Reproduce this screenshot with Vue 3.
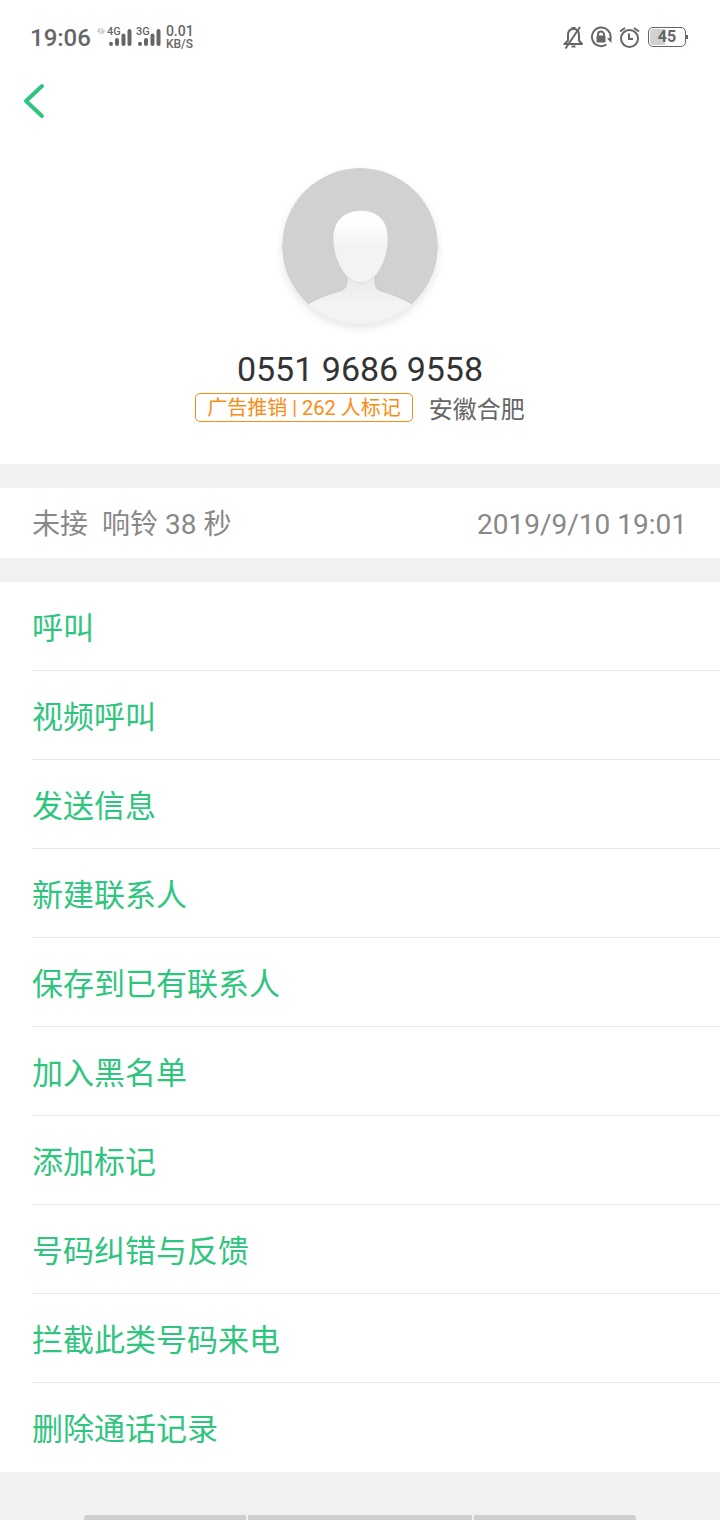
<script setup>
const actions = [
  '呼叫',
  '视频呼叫',
  '发送信息',
  '新建联系人',
  '保存到已有联系人',
  '加入黑名单',
  '添加标记',
  '号码纠错与反馈',
  '拦截此类号码来电',
  '删除通话记录',
]
</script>

<template>
  <div class="page">
    <header class="status">
      <div class="status-left">
        <span class="clock">19:06</span>
        <svg class="data" width="8" height="8" viewBox="0 0 8 8" aria-hidden="true">
          <path d="M0 4 2 1H3.500V7H2V5H0ZM8 4 6 7H4.500V1H6V3H8Z" fill="#cfcfcf" />
        </svg>
        <div v-for="net in ['4G', '3G']" :key="net" class="signal">
          <svg width="24" height="22" viewBox="0 0 24 22" aria-hidden="true">
            <g stroke="#666" stroke-width="4" stroke-linecap="round">
              <path d="M3 16.800V17M9 13V17M15.500 8.500V17M21.500 4V17" />
            </g>
          </svg>
          <span class="net">{{ net }}</span>
        </div>
        <span class="speed"><span class="rate">0.01</span><br />KB/S</span>
      </div>
      <div class="status-right">
        <svg width="22" height="24" viewBox="0 0 22 24" fill="none" stroke="#666" stroke-width="2" aria-hidden="true">
          <path d="M1.500 18H20L17 14.500V9C17 5 14.500 3 11.500 3S6 5 6 9V14.500L2.500 18" stroke-linejoin="round" />
          <path d="M9.500 2H13.500M9.500 20.500H13.500M18 1 3.500 22.500" />
        </svg>
        <svg width="22" height="24" viewBox="0 0 22 24" fill="none" stroke="#666" stroke-width="2" aria-hidden="true">
          <path d="M16.500 18.500A9.300 9.300 0 1 1 20.500 12" />
          <path d="M17 12.500 21.500 11.500V17Z" fill="#666" stroke="none" />
          <rect x="6.500" y="9.500" width="9" height="7" rx="1" fill="#666" stroke="none" />
          <path d="M8 10V8.500A3 3 0 0 1 14 8.500V10" />
        </svg>
        <svg width="22" height="24" viewBox="0 0 22 24" fill="none" stroke="#666" stroke-width="2" aria-hidden="true">
          <circle cx="11.500" cy="12.500" r="8.500" />
          <path d="M11 7.500V13H15M2 5.500 7 2M21 5.500 16 2" />
        </svg>
        <div class="battery"><span class="cell">45</span></div>
      </div>
    </header>

    <nav class="bar">
      <button class="back" type="button" aria-label="返回">
        <svg width="24" height="38" viewBox="0 0 24 38" fill="none" stroke="#2fc57e" stroke-width="4" stroke-linecap="round" stroke-linejoin="round" aria-hidden="true">
          <path d="M20 4 4 19 20 34" />
        </svg>
      </button>
    </nav>

    <section class="profile">
      <svg class="avatar" width="156" height="156" viewBox="0 0 156 156" aria-hidden="true">
        <defs>
          <clipPath id="disc"><circle cx="78" cy="78" r="78" /></clipPath>
          <linearGradient id="face" x1="0" y1="0" x2="0" y2="1">
            <stop offset="0" stop-color="#fff" />
            <stop offset="0.200" stop-color="#fdfdfd" />
            <stop offset="0.500" stop-color="#f3f3f3" />
            <stop offset="1" stop-color="#f3f3f3" />
          </linearGradient>
          <linearGradient id="neck" gradientUnits="userSpaceOnUse" x1="0" y1="106" x2="0" y2="134">
            <stop offset="0" stop-color="#e8e8e8" />
            <stop offset="1" stop-color="#f3f3f3" />
          </linearGradient>
        </defs>
        <g clip-path="url(#disc)">
          <rect width="156" height="156" fill="#d1d1d1" />
          <path d="M65 106V113C65 119 63 121 58 123C46 126 36 130 26 136V158H130V136C120 130 110 126 99 123C94 121 93 119 93 113V106Z" fill="url(#neck)" stroke="#cbcbcb" stroke-width="1" />
          <path d="M79 42.500C96 42.500 106 53 106 70C106 91 95 115 79 115S51 91 51 70C51 53 62 42.500 79 42.500Z" fill="url(#face)" stroke="#cbcbcb" stroke-opacity="0.500" stroke-width="1" />
        </g>
      </svg>
      <h1 class="number">0551 9686 9558</h1>
      <div class="meta">
        <span class="tag">广告推销 | 262 人标记</span>
        <span class="place">安徽合肥</span>
      </div>
    </section>

    <section class="call">
      <span class="call-state"><span>未接</span><span>响铃 38 秒</span></span>
      <time datetime="2019-09-10T19:01">2019/9/10 19:01</time>
    </section>

    <ul class="actions">
      <li v-for="label in actions" :key="label">
        <button type="button">{{ label }}</button>
      </li>
    </ul>

    <footer class="gesture"><i></i><i class="home"></i><i></i></footer>
  </div>
</template>

<style>
body {
  margin: 0;
  background: #f1f1f1;
}
</style>

<style scoped>
.page {
  min-height: 100vh;
  display: flex;
  flex-direction: column;
  font-family: Roboto, "Noto Sans CJK SC", sans-serif;
  background: #f1f1f1;
}
button {
  padding: 0;
  border: 0;
  background: none;
  font: inherit;
  color: inherit;
  cursor: pointer;
}
.status {
  box-sizing: border-box;
  height: 72px;
  display: flex;
  align-items: center;
  justify-content: space-between;
  padding: 3px 32px 0 30px;
  background: #fff;
  color: #666;
}
.status-left,
.status-right {
  display: flex;
  align-items: center;
}
.clock {
  font-size: 24px;
  font-weight: 500;
  line-height: 28px;
}
.data {
  margin: 0 3px 14px 6px;
}
.signal {
  position: relative;
  margin-right: 5px;
  display: flex;
}
.net {
  position: absolute;
  top: -1px;
  left: -1px;
  font-size: 11px;
  line-height: 12px;
  font-weight: 500;
}
.speed {
  font-size: 12px;
  line-height: 12px;
  font-weight: 500;
}
.rate {
  font-size: 14px;
}
.status-right {
  gap: 6px;
}
.battery {
  position: relative;
  box-sizing: border-box;
  width: 38px;
  height: 20px;
  padding: 1px;
  margin: 0 2px 2px 2px;
  border: 1px solid #666;
  border-radius: 5px;
}
.battery::after {
  content: "";
  position: absolute;
  top: 7px;
  right: -3px;
  width: 2px;
  height: 4px;
  background: #666;
}
.cell {
  display: block;
  border-radius: 3px;
  background: linear-gradient(to right, #d1d1d1 45%, #fff 45%);
  font-size: 16px;
  line-height: 16px;
  font-weight: 700;
  text-align: center;
}
.bar {
  padding: 10px 22px 48px;
  background: #fff;
}
.back {
  display: flex;
}
.profile {
  display: flex;
  flex-direction: column;
  align-items: center;
  padding-bottom: 42px;
  background: #fff;
}
.avatar {
  border-radius: 50%;
  box-shadow: 0 4px 8px rgba(0, 0, 0, 0.1);
}
.number {
  margin: 25px 0 4px;
  font-size: 34px;
  line-height: 40px;
  font-weight: 400;
  color: #333;
}
.meta {
  display: flex;
  align-items: center;
  gap: 16px;
}
.tag {
  padding: 2px 11px 0;
  border: 1px solid #fa8c16;
  border-radius: 5px;
  font-size: 20px;
  line-height: 25px;
  color: #fa8c16;
}
.place {
  padding-top: 5px;
  font-size: 24px;
  line-height: 24px;
  color: #666;
}
.call {
  display: flex;
  justify-content: space-between;
  margin: 24px 0;
  padding: 4px 33px 0 32px;
  background: #fff;
  font-size: 28px;
  line-height: 66px;
  color: #888;
}
.call-state {
  display: flex;
  gap: 14px;
}
.actions {
  margin: 0;
  padding: 0 0 0 32px;
  list-style: none;
  background: #fff;
}
.actions li {
  border-bottom: 1px solid #e8e8e8;
}
.actions li:last-child {
  border-bottom-color: transparent;
}
.actions button {
  display: block;
  width: 100%;
  padding-top: 6px;
  font-size: 31px;
  line-height: 82px;
  text-align: left;
  color: #2fc57e;
}
.gesture {
  flex: 1;
  display: flex;
  align-items: flex-end;
  justify-content: center;
  gap: 2px;
  min-height: 48px;
}
.gesture i {
  width: 22.5%;
  height: 5px;
  background: #cecece;
}
.gesture .home {
  width: 31%;
}
.gesture i:first-child {
  border-top-left-radius: 3px;
}
.gesture i:last-child {
  border-top-right-radius: 3px;
}
</style>
